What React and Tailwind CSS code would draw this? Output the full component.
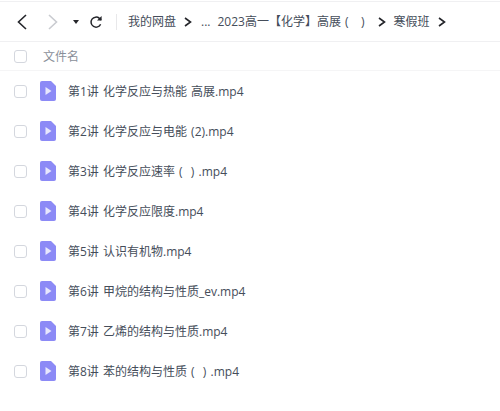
const files = [
  '第1讲 化学反应与热能 高展.mp4',
  '第2讲 化学反应与电能 (2).mp4',
  '第3讲 化学反应速率 (  ) .mp4',
  '第4讲 化学反应限度.mp4',
  '第5讲 认识有机物.mp4',
  '第6讲 甲烷的结构与性质_ev.mp4',
  '第7讲 乙烯的结构与性质.mp4',
  '第8讲 苯的结构与性质 (  ) .mp4',
]

function Checkbox() {
  return <div className="w-[13px] h-[13px] rounded-[3px] border border-[#d4d7de] bg-white shrink-0" />
}

function VideoIcon() {
  return (
    <svg width="16" height="20" viewBox="0 0 16 20" className="shrink-0">
      <path d="M2 0H11L16 5V18a2 2 0 0 1-2 2H2a2 2 0 0 1-2-2V2a2 2 0 0 1 2-2Z" fill="#8c8af6" />
      <path d="M5.5 6L11.5 10L5.5 14Z" fill="#e8e8fd" />
    </svg>
  )
}

function Sep() {
  return (
    <svg width="8" height="10" viewBox="0 0 8 10" className="shrink-0">
      <path d="M1 1L6.5 5L1 9" fill="none" stroke="#25262b" strokeWidth="1.6" />
    </svg>
  )
}

export default function App() {
  return (
    <div className="w-[500px] h-[411px] bg-white overflow-hidden text-[12px] text-[#454d5a] [word-spacing:1px]" style={{ fontFamily: '"Open Sans", "Noto Sans CJK SC", sans-serif' }}>
      <div className="h-[41px] mt-px border-t border-b border-[#f0f0f2] flex items-center">
        <svg width="12" height="16" viewBox="0 0 12 16" className="ml-[16px] shrink-0">
          <path d="M10 1L2.5 8L10 15" fill="none" stroke="#25262b" strokeWidth="1.6" />
        </svg>
        <svg width="12" height="16" viewBox="0 0 12 16" className="ml-[19px] shrink-0">
          <path d="M2 1L9.5 8L2 15" fill="none" stroke="#c9cbd0" strokeWidth="1.6" />
        </svg>
        <svg width="6" height="4" viewBox="0 0 6 4" className="ml-[14px] shrink-0">
          <path d="M0 0H6L3 4Z" fill="#25262b" />
        </svg>
        <svg width="14" height="14" viewBox="0 0 14 14" className="ml-[10px] shrink-0">
          <path d="M11.6 9.2A5 5 0 1 1 10.4 3.4L12 5" fill="none" stroke="#25262b" strokeWidth="1.5" />
          <path d="M12.6 1V5.6H8Z" fill="#25262b" />
        </svg>
        <div className="w-px h-[16px] bg-[#e8e8ea] ml-[13px] mr-[11px]" />
        <span>我的网盘</span>
        <div className="ml-[8px] mr-[9px]"><Sep /></div>
        <span>...</span>
        <span className="ml-[7px] whitespace-pre">2023高一【化学】高展 (   )</span>
        <div className="ml-[14px] mr-[7px]"><Sep /></div>
        <span>寒假班</span>
        <div className="ml-[8px]"><Sep /></div>
      </div>
      <div className="h-[29px] border-b border-[#f5f5f6] flex items-center pl-[14px] gap-[16px] text-[#8a8f99]">
        <Checkbox />
        <span className="translate-y-px">文件名</span>
      </div>
      <div className="flex flex-col">
        {files.map((name) => (
          <div key={name} className="h-[40px] flex items-center pl-[14px]">
            <Checkbox />
            <div className="ml-[13px]"><VideoIcon /></div>
            <span className="ml-[12px] translate-y-px whitespace-pre">{name}</span>
          </div>
        ))}
      </div>
    </div>
  )
}
